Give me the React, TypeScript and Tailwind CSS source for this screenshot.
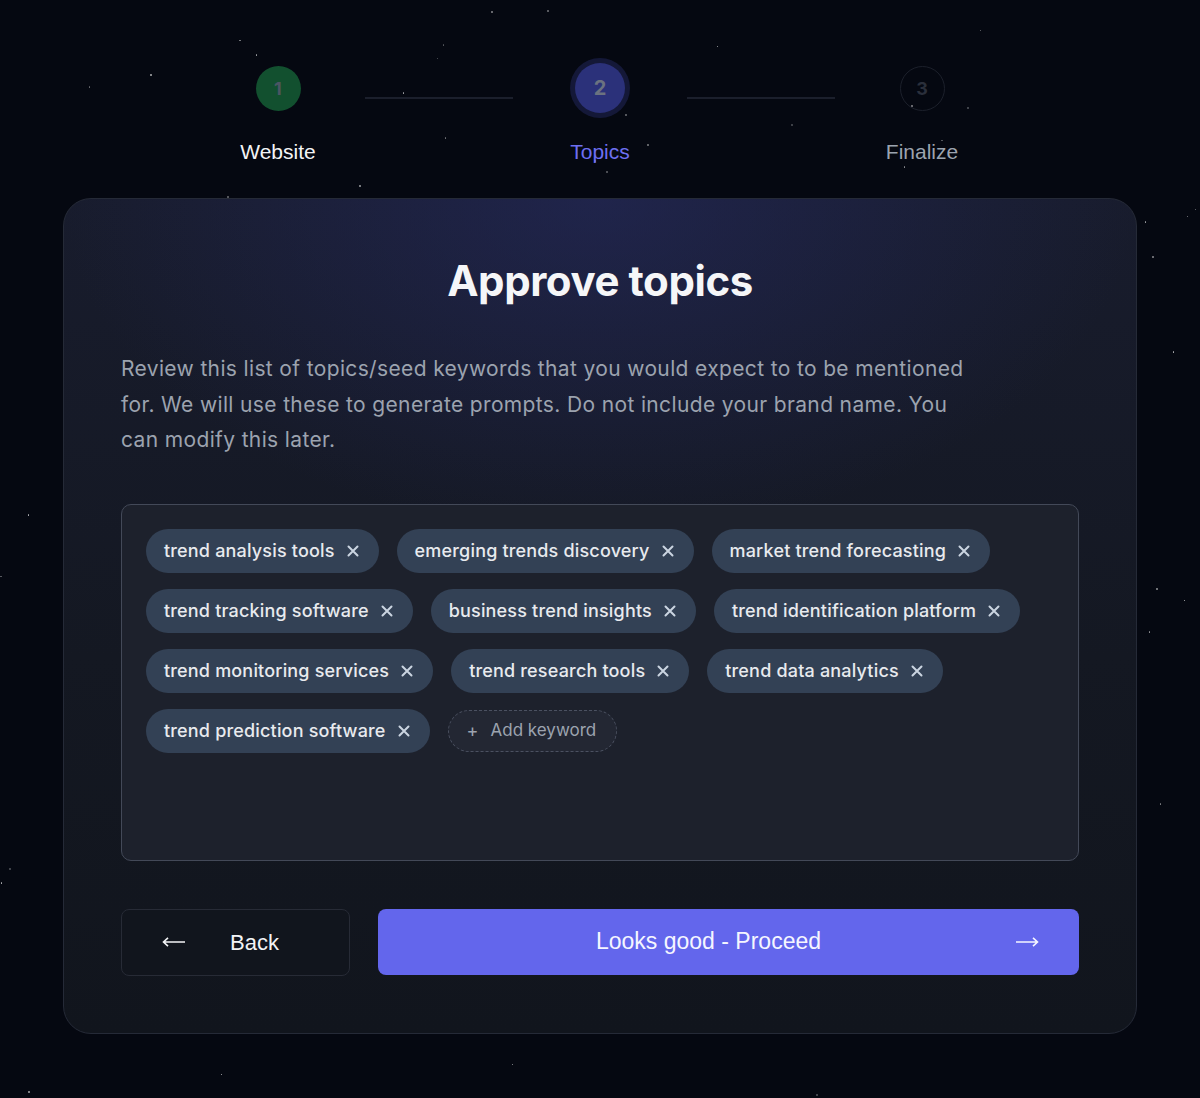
import React from "react";

const topics = [
  "trend analysis tools",
  "emerging trends discovery",
  "market trend forecasting",
  "trend tracking software",
  "business trend insights",
  "trend identification platform",
  "trend monitoring services",
  "trend research tools",
  "trend data analytics",
  "trend prediction software",
];

// deterministic star field
function makeStars(count: number) {
  let seed = 42;
  const rand = () => {
    seed = (seed * 16807) % 2147483647;
    return (seed - 1) / 2147483646;
  };
  return Array.from({ length: count }, () => ({
    x: rand() * 1200,
    y: rand() * 1098,
    size: rand() > 0.8 ? 2 : 1.5,
    o: 0.25 + rand() * 0.5,
  }));
}

const stars = makeStars(150);

function CloseIcon() {
  return (
    <svg width="12" height="12" viewBox="0 0 12 12" className="shrink-0 text-[#cbd5e1]">
      <path d="M1.5 1.5l9 9M10.5 1.5l-9 9" stroke="currentColor" strokeWidth="2" strokeLinecap="round" />
    </svg>
  );
}

function Arrow({ dir }: { dir: "left" | "right" }) {
  return (
    <svg width="24" height="12" viewBox="0 0 24 12" className="shrink-0">
      {dir === "left" ? (
        <path d="M23 6H1.5M6 1.8L1.5 6 6 10.2" stroke="currentColor" strokeWidth="1.6" fill="none" />
      ) : (
        <path d="M1 6h21.5M18 1.8L22.5 6 18 10.2" stroke="currentColor" strokeWidth="1.6" fill="none" />
      )}
    </svg>
  );
}

function Step({ n, label, state }: { n: number; label: string; state: "done" | "active" | "todo" }) {
  return (
    <div className="flex w-40 flex-col items-center">
      <div className="flex h-[60px] items-center justify-center">
        {state === "done" && (
          <div className="flex h-[45px] w-[45px] items-center justify-center rounded-full bg-[#12502f] text-[18px] font-bold text-[#4b5563]">
            {n}
          </div>
        )}
        {state === "active" && (
          <div className="flex h-[60px] w-[60px] items-center justify-center rounded-full bg-[#141838]">
            <div className="flex h-[50px] w-[50px] items-center justify-center rounded-full bg-[#2b317a] text-[20px] font-bold text-[#6b7280]">
              {n}
            </div>
          </div>
        )}
        {state === "todo" && (
          <div className="flex h-[45px] w-[45px] items-center justify-center rounded-full border border-[#1c202b] text-[18px] font-bold text-[#2a2f3b]">
            {n}
          </div>
        )}
      </div>
      <p
        className={
          "mt-5 font-['Liberation_Sans',Arial,sans-serif] text-[21px] leading-7 " +
          (state === "done" ? "text-[#f3f4f6]" : state === "active" ? "text-[#6d6ff0]" : "text-[#9ca3af]")
        }
      >
        {label}
      </p>
    </div>
  );
}

export default function App() {
  return (
    <div className="relative min-h-[1098px] w-full overflow-hidden bg-[#050811] font-['Inter',sans-serif]">
      {/* star field */}
      <div className="pointer-events-none absolute inset-0">
        {stars.map((s, i) => (
          <span
            key={i}
            className="absolute rounded-full bg-white"
            style={{ left: s.x, top: s.y, width: s.size, height: s.size, opacity: s.o }}
          />
        ))}
      </div>

      <div className="relative flex flex-col items-center pt-[58px]">
        {/* stepper */}
        <div className="flex items-start">
          <Step n={1} label="Website" state="done" />
          <div className="mx-[7px] mt-[39px] h-[2px] w-[148px] bg-[#1b1f2c]" />
          <Step n={2} label="Topics" state="active" />
          <div className="mx-[7px] mt-[39px] h-[2px] w-[148px] bg-[#1b1f2c]" />
          <Step n={3} label="Finalize" state="todo" />
        </div>

        {/* card */}
        <div className="mt-8 w-[1074px] rounded-[28px] border border-[#252a37] bg-[radial-gradient(ellipse_50%_40%_at_50%_0%,rgba(38,43,100,0.55),transparent_100%),linear-gradient(to_bottom,#181c2d,#141822_55%,#11151d)] p-[57px]">
          <h1 className="text-center text-[42px] font-bold leading-[50px] tracking-[-0.01em] text-[#f5f6f8]">
            Approve topics
          </h1>
          <p className="mt-[45px] max-w-[856px] text-[21px] leading-[35.5px] tracking-[0.017em] text-[#9ca3af]">
            Review this list of topics/seed keywords that you would expect to to be mentioned for. We will use these
            to generate prompts. Do not include your brand name. You can modify this later.
          </p>

          <div className="mt-[46px] h-[357px] rounded-[10px] border border-[#434958] bg-[#1d212c] p-6">
            <div className="flex flex-wrap gap-x-[18px] gap-y-4">
              {topics.map((t) => (
                <span
                  key={t}
                  className="flex h-11 items-center gap-3 rounded-full bg-[#334155] pl-[18px] pr-[20px] text-[18px] font-medium tracking-[0.01em] text-[#e8eaee]"
                >
                  {t}
                  <CloseIcon />
                </span>
              ))}
              <span className="my-px flex h-[42px] items-center gap-3 rounded-full border border-dashed border-[#4b5161] bg-[#232733] pl-[18px] pr-5 text-[17px] text-[#9ca3af]">
                <span className="text-[18px] leading-none">+</span>
                Add keyword
              </span>
            </div>
          </div>

          <div className="mt-12 flex gap-7 font-['Liberation_Sans',Arial,sans-serif]">
            <button className="flex h-[67px] w-[229px] items-center gap-[44px] rounded-lg border border-[#272b36] bg-[#11151d] pl-10 text-[22px] text-[#f3f4f6]">
              <Arrow dir="left" />
              Back
            </button>
            <button className="flex h-[66px] flex-1 items-center rounded-lg bg-[#6366ec] px-10 text-[23px] text-[#f5f6ff]">
              <span className="flex-1 pr-4 text-center">Looks good - Proceed</span>
              <Arrow dir="right" />
            </button>
          </div>
        </div>
      </div>
    </div>
  );
}
